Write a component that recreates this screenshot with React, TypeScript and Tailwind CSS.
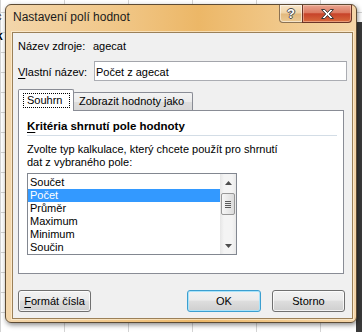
import React from "react";

const items = ["Součet", "Počet", "Průměr", "Maximum", "Minimum", "Součin"];

function Btn({ children, focused }: { children: React.ReactNode; focused?: boolean }) {
  return (
    <div
      className={
        "h-[22px] flex items-center justify-center rounded-[3px] border leading-[13px] text-[11px] text-black bg-[linear-gradient(180deg,#f2f2f2_0%,#ebebeb_45%,#dddddd_52%,#cfcfcf_100%)] " +
        (focused
          ? "border-[#3c9fd0] shadow-[inset_0_0_0_1px_#a9e3fa]"
          : "border-[#707070] shadow-[inset_0_0_0_1px_rgba(255,255,255,0.75)]")
      }
    >
      {children}
    </div>
  );
}

export default function App() {
  return (
    <div className="relative w-[362px] h-[332px] overflow-hidden bg-white font-['Liberation_Sans',Arial,sans-serif] text-[11px] text-black [background-image:linear-gradient(#d4d4d4_1px,transparent_1px),linear-gradient(90deg,#d4d4d4_1px,transparent_1px)] [background-size:64px_20px] [background-position:0_12px]">
      {/* spreadsheet bits behind */}
      <span className="absolute left-[-4px] top-[10px] text-[11px] leading-[13px]">c</span>
      <span className="absolute left-[-4px] top-[30px] text-[12px] font-bold leading-[13px]">k</span>
      <div className="absolute right-0 top-[22px] bottom-0 w-[6px] bg-[#3a3a3a]" />

      {/* dialog window */}
      <div className="absolute left-[5px] top-[4px] w-[352px] h-[319px] flex flex-col rounded-[6px] border border-[#5d4b34] shadow-[1px_2px_5px_rgba(0,0,0,0.45)] bg-[linear-gradient(90deg,#f3d6ab_0%,#f1c88a_30%,#ecb767_55%,#f1c98c_80%,#f4d5a8_100%)]">
        {/* title bar */}
        <div className="h-[27px] flex items-start shrink-0">
          <span className="ml-[7px] mt-[5px] text-[12px] leading-[15px] text-[#1b1b1b]">Nastavení polí hodnot</span>
          <div className="ml-auto mr-[4px] flex">
            <div className="w-[24px] h-[18px] flex items-center justify-center rounded-bl-[4px] border border-t-0 border-[#8a7153] bg-[linear-gradient(180deg,#f7e6ca_0%,#f0d3a6_48%,#e2b87d_52%,#ecca94_100%)] shadow-[inset_0_0_0_1px_rgba(255,255,255,0.5)]">
              <span className="text-[13px] font-bold leading-[13px] text-white [text-shadow:1px_0_#4a4a4a,-1px_0_#4a4a4a,0_1px_#4a4a4a,0_-1px_#4a4a4a]">?</span>
            </div>
            <div className="w-[50px] h-[18px] -ml-px flex items-center justify-center rounded-br-[4px] border border-t-0 border-[#6b3426] bg-[linear-gradient(180deg,#e9a590_0%,#dc7b62_45%,#c7432a_52%,#d86a3c_100%)] shadow-[inset_0_0_0_1px_rgba(255,220,200,0.45)]">
              <svg width="15" height="12" viewBox="0 0 15 12">
                <path
                  d="M1.5 1.5h3.3l2.7 3l2.7-3h3.3l-4.2 4.5l4.2 4.5h-3.3l-2.7-3l-2.7 3h-3.3l4.2-4.5z"
                  fill="#ffffff"
                  stroke="#3a3a3a"
                  strokeWidth="1"
                  strokeLinejoin="round"
                />
              </svg>
            </div>
          </div>
        </div>

        {/* client area */}
        <div className="ml-[6px] mr-[3px] h-[287px] shrink-0 flex flex-col border border-[#9b8058] bg-[#f0f0f0] pt-[7px] shadow-[0_0_0_1px_rgba(255,245,225,0.6)]">
          <div className="flex h-[13px] leading-[13px] pl-[5px]">
            <span className="w-[75px]">Název zdroje:</span>
            <span>agecat</span>
          </div>

          <div className="flex h-[20px] mt-[8px] pl-[5px] pr-[5px]">
            <span className="w-[76px] pt-[5px] leading-[13px]">
              <u className="underline-offset-2">V</u>lastní název:
            </span>
            <div className="flex-1 border border-[#abadb3] border-t-[#a3a5ab] bg-white pl-[1px] pt-[1px] leading-[18px]">
              Počet z agecat
            </div>
          </div>

          {/* tabs */}
          <div className="relative z-10 flex items-end h-[21px] mt-[8px] pl-[5px]">
            <div className="relative z-[2] w-[56px] h-[22px] -mb-px border border-b-0 border-[#898c95] rounded-t-[2px] bg-white">
              <div className="ml-[4px] mt-[3px] w-[47px] h-[15px] border border-dotted border-black pl-[3px] leading-[13px]">
                Souhrn
              </div>
            </div>
            <div className="relative z-[1] -ml-px w-[120px] h-[18px] border border-b-0 border-[#898c95] rounded-t-[2px] bg-[linear-gradient(180deg,#f3f3f3_0%,#ebebeb_50%,#dddddd_51%,#d8d8d8_100%)] pl-[5px] pt-[2px] leading-[13px]">
              Zobrazit hodnoty jako
            </div>
          </div>

          {/* panel */}
          <div className="ml-[5px] mr-[8px] h-[164px] border border-[#898c95] bg-white pt-[9px] pl-[8px] pr-[6px]">
            <div className="h-[13px] leading-[13px] text-[11.5px] font-bold">
              <u className="underline-offset-2">K</u>ritéria shrnutí pole hodnoty
            </div>
            <div className="mt-[2px] h-px bg-[#d3dde6]" />
            <div className="mt-[7px] leading-[13px]">
              Zvolte typ kalkulace, který chcete použít pro shrnutí
              <br />
              dat z vybraného pole:
            </div>
            <div className="mt-[4px] w-[210px] h-[82px] flex border border-[#828790] bg-white">
              <div className="flex-1 pt-[2px] overflow-hidden">
                {items.map((it, i) => (
                  <div
                    key={it}
                    className={
                      "h-[13px] leading-[13px] pl-[2px] " + (i === 1 ? "bg-[#3399ff] text-white" : "")
                    }
                  >
                    {it}
                  </div>
                ))}
              </div>
              <div className="w-[16px] flex flex-col bg-[linear-gradient(90deg,#e6e6e6_0%,#f4f4f4_25%,#f4f4f4_75%,#e9e9e9_100%)]">
                <div className="h-[17px] flex items-center justify-center">
                  <svg width="7" height="4" viewBox="0 0 7 4">
                    <path d="M0 4L3.5 0L7 4z" fill="#4d4d4d" />
                  </svg>
                </div>
                <div className="mt-[2px] mx-[1px] h-[22px] flex flex-col items-center justify-center gap-[1px] rounded-[2px] border border-[#979797] bg-[linear-gradient(90deg,#f6f6f6_0%,#e9e9e9_50%,#dcdcdc_100%)]">
                  <div className="w-[6px] h-px bg-[#5a5a5a]" />
                  <div className="w-[6px] h-px bg-[#5a5a5a]" />
                  <div className="w-[6px] h-px bg-[#5a5a5a]" />
                  <div className="w-[6px] h-px bg-[#5a5a5a]" />
                </div>
                <div className="flex-1" />
                <div className="h-[17px] flex items-center justify-center">
                  <svg width="7" height="4" viewBox="0 0 7 4">
                    <path d="M0 0L3.5 4L7 0z" fill="#4d4d4d" />
                  </svg>
                </div>
              </div>
            </div>
          </div>

          {/* buttons */}
          <div className="mt-[16px] flex pl-[5px] pr-[7px]">
            <div className="w-[73px]">
              <Btn>
                <span>
                  <u className="underline-offset-2">F</u>ormát čísla
                </span>
              </Btn>
            </div>
            <div className="ml-auto w-[74px]">
              <Btn focused>OK</Btn>
            </div>
            <div className="ml-[11px] w-[73px]">
              <Btn>Storno</Btn>
            </div>
          </div>
        </div>
      </div>
    </div>
  );
}
